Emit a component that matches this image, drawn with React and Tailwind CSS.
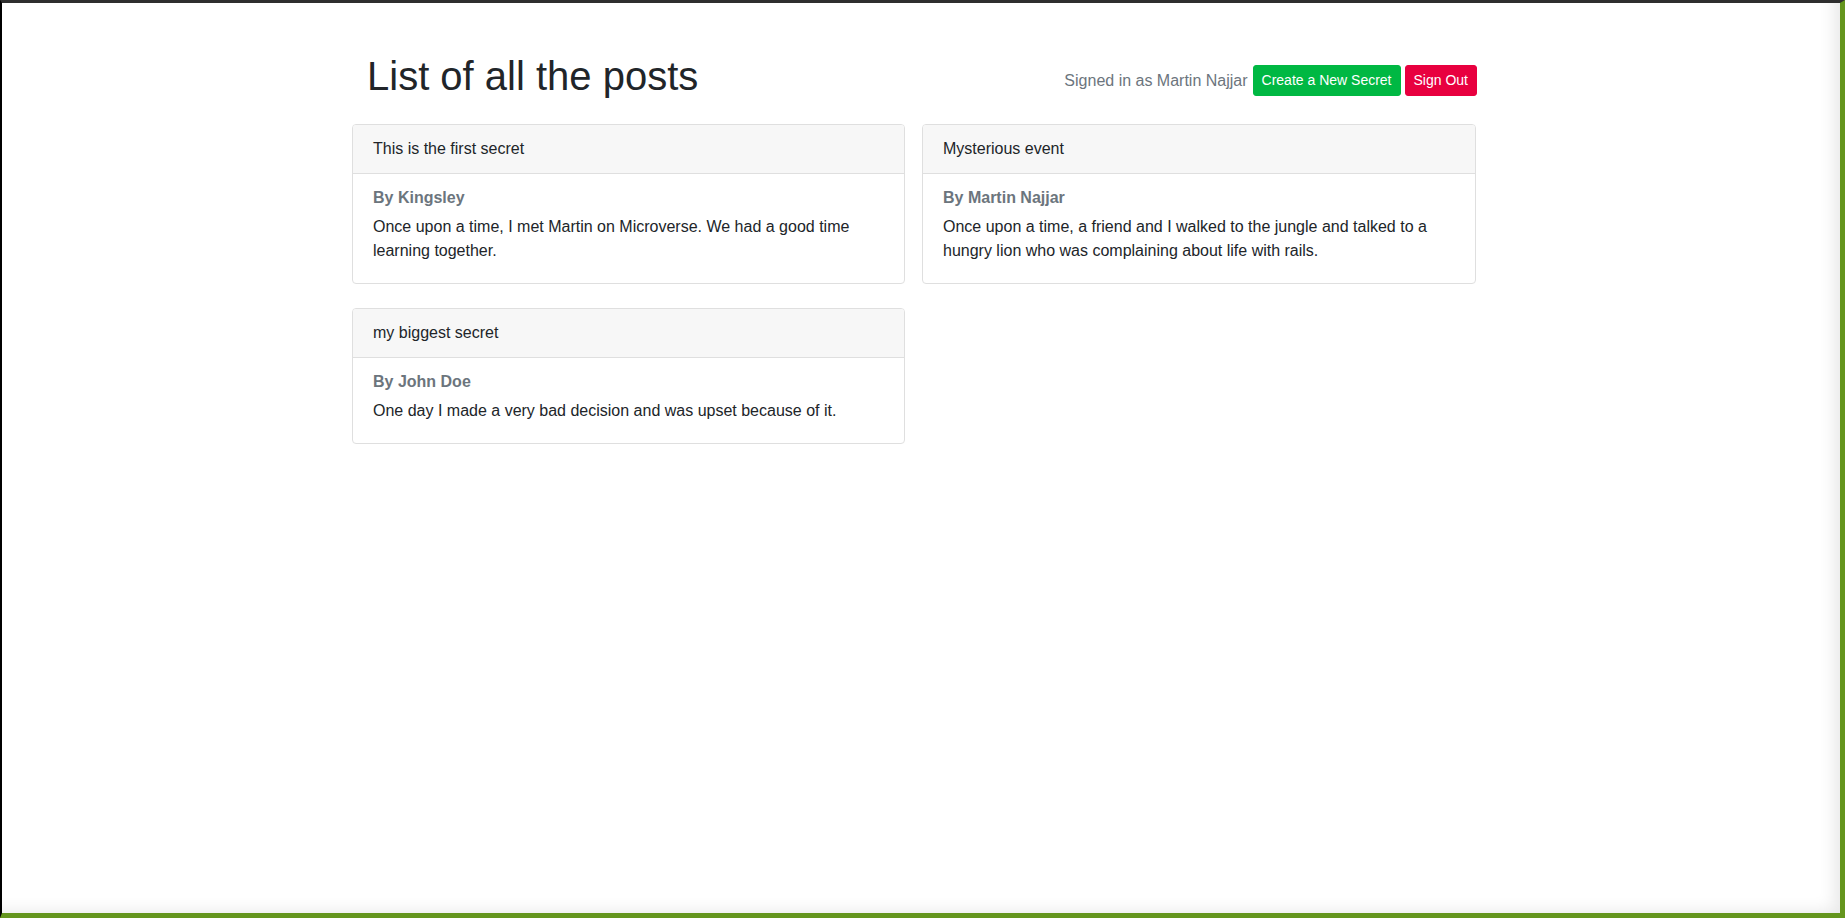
import React from "react";

const posts = [
  {
    title: "This is the first secret",
    author: "By Kingsley",
    body: "Once upon a time, I met Martin on Microverse. We had a good time learning together.",
  },
  {
    title: "Mysterious event",
    author: "By Martin Najjar",
    body: "Once upon a time, a friend and I walked to the jungle and talked to a hungry lion who was complaining about life with rails.",
  },
  {
    title: "my biggest secret",
    author: "By John Doe",
    body: "One day I made a very bad decision and was upset because of it.",
  },
];

function Card({ post }) {
  return (
    <div className="rounded-[4px] border border-[#dfdfdf] bg-white">
      <div className="rounded-t-[3px] border-b border-[#dfdfdf] bg-[#f7f7f7] px-5 py-3 text-[16px] leading-6 text-[#212529]">
        {post.title}
      </div>
      <div className="p-5">
        <h6 className="-mt-[6px] mb-2 text-[16px] font-bold leading-[19.2px] text-[#6c757d]">
          {post.author}
        </h6>
        <p className="text-[16px] leading-6 text-[#212529]">{post.body}</p>
      </div>
    </div>
  );
}

export default function App() {
  return (
    <div
      className="flex h-screen w-full flex-col border-t-[3px] border-r-[5px] border-b-[5px] border-l-2 border-t-[#2f2f2f] border-r-[#64951d] border-b-[#64951d] border-l-black"
      style={{ fontFamily: '"Liberation Sans", Arial, sans-serif' }}
    >
      <div className="flex-1 bg-white shadow-[inset_-14px_-10px_16px_-8px_rgba(0,0,0,0.09)]">
        <div className="ml-[350px] w-[1125px] pt-[49px]">
          <div className="flex items-start justify-between">
            <h1 className="ml-[15px] text-[40px] font-normal leading-[48px] text-[#212529]">
              List of all the posts
            </h1>
            <div className="mt-[13px] flex items-center">
              <span className="mr-[5px] text-[16px] leading-6 text-[#6c757d]">
                Signed in as Martin Najjar
              </span>
              <button className="rounded-[3px] border border-[#00b843] bg-[#00b843] px-2 py-1 text-[14px] leading-[21px] text-white">
                Create a New Secret
              </button>
              <button className="ml-1 rounded-[3px] border border-[#e8003f] bg-[#e8003f] px-2 py-1 text-[14px] leading-[21px] text-white">
                Sign Out
              </button>
            </div>
          </div>
          <div className="mt-6 grid grid-cols-[553px_554px] items-start gap-x-[17px] gap-y-6">
            {posts.map((p) => (
              <Card key={p.title} post={p} />
            ))}
          </div>
        </div>
      </div>
    </div>
  );
}
